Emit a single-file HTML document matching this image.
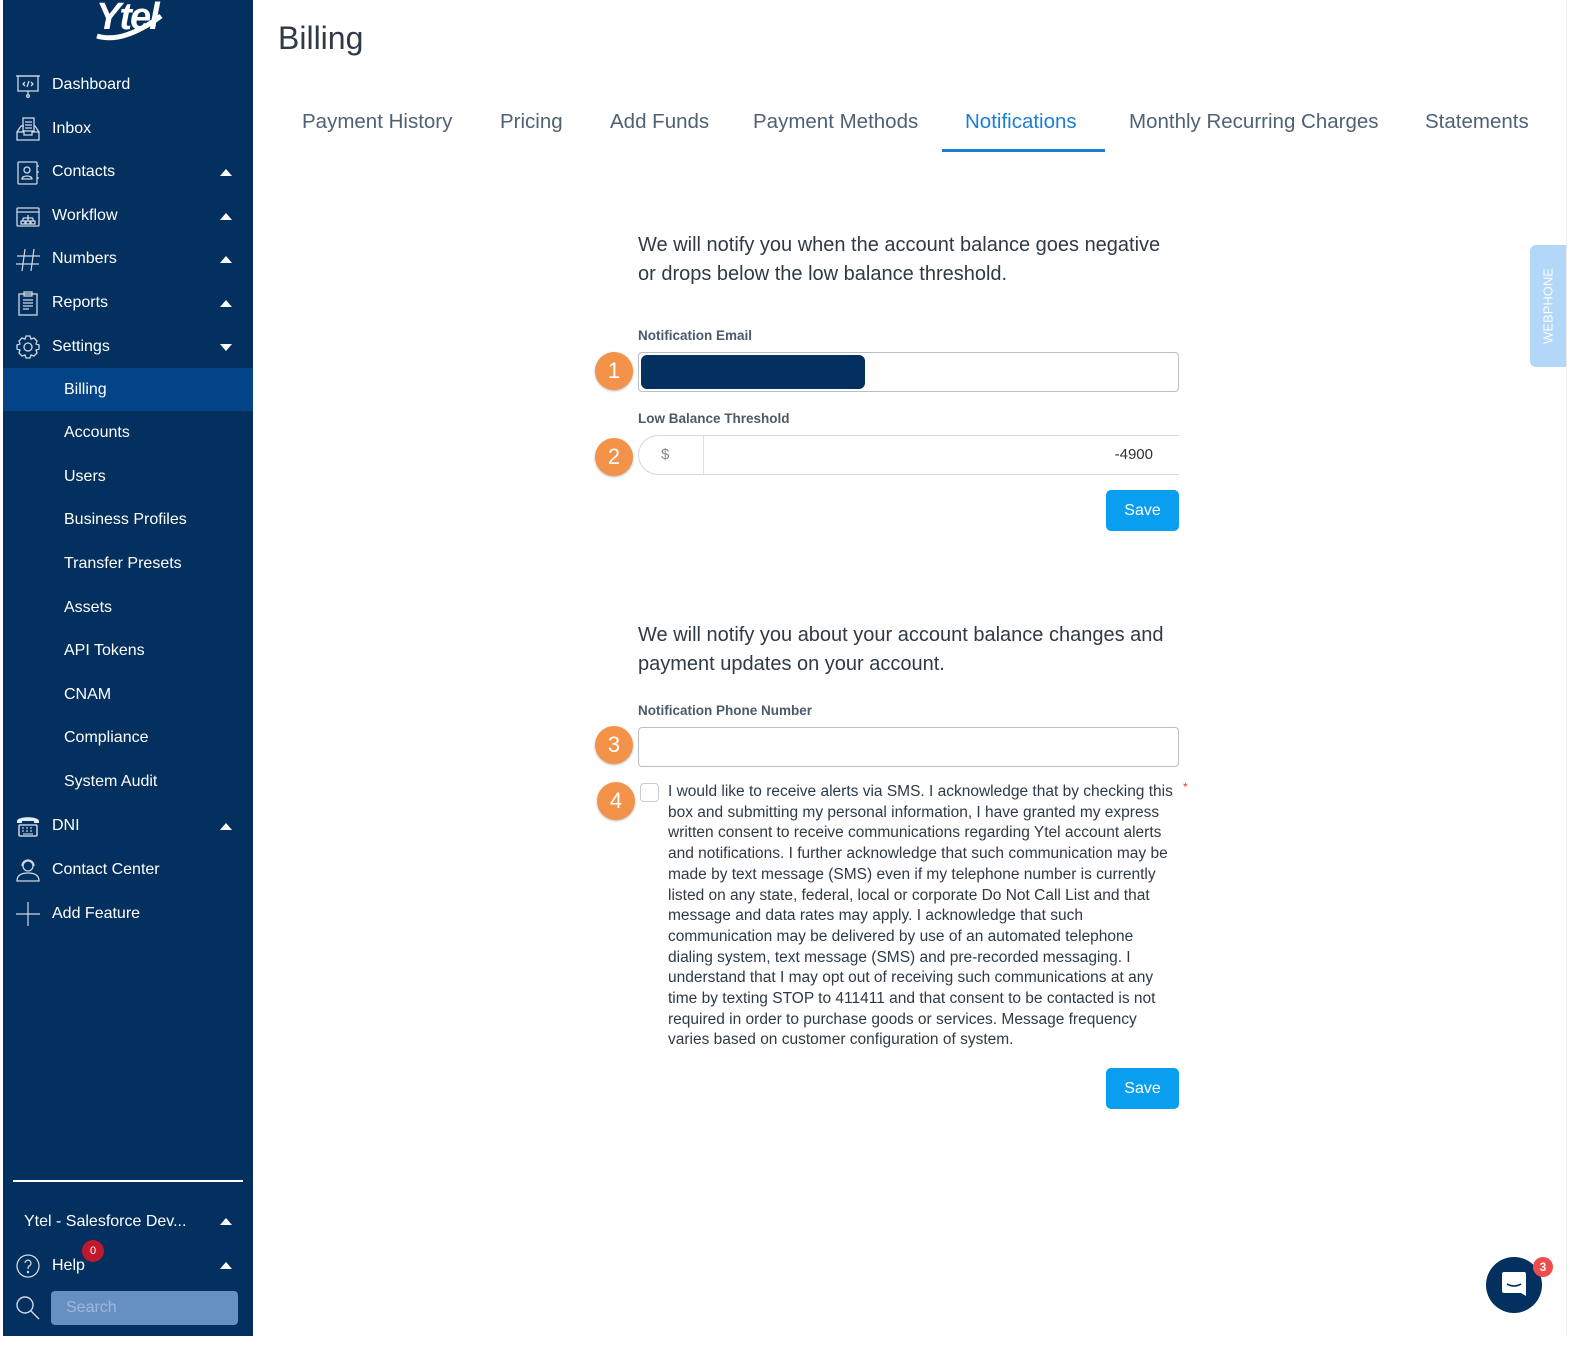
<!DOCTYPE html>
<html><head><meta charset="utf-8"><style>
*{box-sizing:border-box;margin:0;padding:0}
body{width:1588px;height:1353px;background:#fff;font-family:"Liberation Sans",sans-serif;position:relative;overflow:hidden}
.sb{position:absolute;left:3px;top:0;width:250px;height:1336px;background:#03305e}
.it{position:absolute;left:49px;color:#fff;font-size:16px;line-height:20px}
.sub{left:61px}
.ic{position:absolute;left:12px;width:26px;height:26px}
.car{position:absolute;left:217px;width:0;height:0;border-left:6px solid transparent;border-right:6px solid transparent;border-bottom:7px solid #fff}
.car.d{border-bottom:none;border-top:7px solid #fff}
.t{position:absolute;font-size:20.5px;color:#4f6275;top:110px}
.lbl{position:absolute;left:638px;font-size:13.5px;font-weight:bold;color:#4d5a68}
.inp{position:absolute;left:638px;width:541px;height:40px;border:1.5px solid #b9bfc6;border-radius:4px;background:#fff}
.b{position:absolute;width:38px;height:38px;border-radius:50%;background:#f39249;color:#fff;font-size:22px;text-align:center;line-height:38px;box-shadow:0 1px 2px rgba(0,0,0,.3)}
.save{position:absolute;left:1106px;width:73px;height:41px;background:#0a9ef0;border-radius:5px;color:#fff;font-size:16px;text-align:center;line-height:41px}
.p{position:absolute;left:638px;font-size:20px;color:#2f3a45;line-height:29px;width:530px}
</style></head><body>
<div class="sb">
<div style="position:absolute;left:93px;top:-4px;color:#fff;font-size:38px;font-weight:bold;font-style:italic;letter-spacing:-2px">Ytel</div>
<svg style="position:absolute;left:90px;top:14px" width="75" height="30"><path d="M4 22 Q30 30 68 2" stroke="#fff" stroke-width="5" fill="none"/></svg>

<svg class="ic" style="top:73px" viewBox="0 0 26 26" fill="none" stroke="#cfd8e3" stroke-width="1.3"><rect x="3" y="3" width="20" height="15"/><path d="M1 3h24M13 18v4"/><circle cx="13" cy="23" r="1.3"/><path d="M10 9l-2 2 2 2M16 9l2 2-2 2M14 8l-2 6"/></svg>
<div class="it" style="top:75px">Dashboard</div>
<svg class="ic" style="top:116px" viewBox="0 0 26 26" fill="none" stroke="#cfd8e3" stroke-width="1.3"><rect x="8" y="2" width="11" height="13"/><path d="M10 6h7M10 9h7M10 12h7M2 16l4-6h3M24 16l-4-6h-1M2 16h7v3h8v-3h7v8H2z"/></svg>
<div class="it" style="top:119px">Inbox</div>
<svg class="ic" style="top:160px" viewBox="0 0 26 26" fill="none" stroke="#cfd8e3" stroke-width="1.3"><rect x="3" y="2" width="19" height="22" rx="1"/><circle cx="12" cy="10" r="3"/><path d="M7 19c0-4 10-4 10 0zM22 6h2M22 12h2M22 18h2"/></svg>
<div class="it" style="top:162px">Contacts</div><div class="car" style="top:169px"></div>
<svg class="ic" style="top:204px" viewBox="0 0 26 26" fill="none" stroke="#cfd8e3" stroke-width="1.3"><rect x="2" y="4" width="22" height="18" rx="1"/><path d="M2 8h22M13 11v3M8 14h10M8 14v3M13 14v3M18 14v3"/><rect x="6" y="17" width="4" height="3"/><rect x="11" y="17" width="4" height="3"/><rect x="16" y="17" width="4" height="3"/></svg>
<div class="it" style="top:206px">Workflow</div><div class="car" style="top:213px"></div>
<svg class="ic" style="top:247px" viewBox="0 0 26 26" fill="none" stroke="#cfd8e3" stroke-width="1.2"><path d="M10 2L7 24M19 2L16 24M2 9h23M1 17h23"/></svg>
<div class="it" style="top:249px">Numbers</div><div class="car" style="top:256px"></div>
<svg class="ic" style="top:290px" viewBox="0 0 26 26" fill="none" stroke="#cfd8e3" stroke-width="1.3"><rect x="4" y="4" width="18" height="21"/><rect x="9" y="2" width="8" height="4"/><path d="M8 10h10M8 13h10M8 16h10M8 19h6"/></svg>
<div class="it" style="top:293px">Reports</div><div class="car" style="top:300px"></div>
<svg class="ic" style="top:334px" viewBox="0 0 26 26" fill="none" stroke="#cfd8e3" stroke-width="1.3"><circle cx="13" cy="13" r="4"/><path d="M11 2h4l1 3 3-1 3 3-1 3 3 1v4l-3 1 1 3-3 3-3-1-1 3h-4l-1-3-3 1-3-3 1-3-3-1v-4l3-1-1-3 3-3 3 1z"/></svg>
<div class="it" style="top:337px">Settings</div><div class="car d" style="top:344px"></div>
<div style="position:absolute;left:0;top:368px;width:250px;height:43px;background:#034489"></div>
<div class="it sub" style="top:380px">Billing</div>
<div class="it sub" style="top:423px">Accounts</div>
<div class="it sub" style="top:467px">Users</div>
<div class="it sub" style="top:510px">Business Profiles</div>
<div class="it sub" style="top:554px">Transfer Presets</div>
<div class="it sub" style="top:598px">Assets</div>
<div class="it sub" style="top:641px">API Tokens</div>
<div class="it sub" style="top:685px">CNAM</div>
<div class="it sub" style="top:728px">Compliance</div>
<div class="it sub" style="top:772px">System Audit</div>
<svg class="ic" style="top:813px" viewBox="0 0 26 26" fill="#e6ecf3"><path d="M2 8c0-5 22-5 22 0v2h-5V8H7v2H2z"/><rect x="4" y="12" width="18" height="11" rx="1" fill="none" stroke="#e6ecf3" stroke-width="1.3"/><path d="M7 15h2M11 15h2M15 15h2M7 18h2M11 18h2M15 18h2M8 21h10" stroke="#e6ecf3"/></svg>
<div class="it" style="top:816px">DNI</div><div class="car" style="top:823px"></div>
<svg class="ic" style="top:857px" viewBox="0 0 26 26" fill="none" stroke="#cfd8e3" stroke-width="1.3"><circle cx="13" cy="9" r="5"/><path d="M7 9a6 6 0 0 1 12 0M2 24c0-6 5-8 11-8s11 2 11 8z"/></svg>
<div class="it" style="top:860px">Contact Center</div>
<svg class="ic" style="top:901px" viewBox="0 0 26 26" fill="none" stroke="#cfd8e3" stroke-width="1.2"><path d="M13 1v24M1 13h24"/></svg>
<div class="it" style="top:904px">Add Feature</div>
<div style="position:absolute;left:10px;top:1180px;width:230px;height:2px;background:#fff"></div>
<div class="it" style="left:21px;top:1212px">Ytel - Salesforce Dev...</div><div class="car" style="top:1218px"></div>
<svg class="ic" style="top:1253px" viewBox="0 0 26 26" fill="none" stroke="#cfd8e3" stroke-width="1.3"><circle cx="13" cy="13" r="11"/><path d="M10 10a3 3 0 1 1 4 3c-1 1-1 2-1 3"/><circle cx="13" cy="19" r=".6"/></svg>
<div class="it" style="top:1256px">Help</div><div class="car" style="top:1262px"></div>
<div style="position:absolute;left:79px;top:1240px;width:22px;height:22px;border-radius:50%;background:#c0182c;color:#fff;font-size:11px;text-align:center;line-height:22px">0</div>
<svg class="ic" style="top:1295px" viewBox="0 0 26 26" fill="none" stroke="#cfd8e3" stroke-width="1.4"><circle cx="10" cy="10" r="8"/><path d="M16 16l8 8"/></svg>
<div style="position:absolute;left:48px;top:1291px;width:187px;height:34px;background:#6690c2;border-radius:4px;color:#9fb8d8;font-size:16px;line-height:34px;padding-left:15px">Search</div>
</div>

<div style="position:absolute;left:278px;top:20px;font-size:32px;color:#2f3a45">Billing</div>
<div class="t" style="left:302px">Payment History</div>
<div class="t" style="left:500px">Pricing</div>
<div class="t" style="left:610px">Add Funds</div>
<div class="t" style="left:753px">Payment Methods</div>
<div class="t" style="left:965px;color:#1a7fd4">Notifications</div>
<div style="position:absolute;left:942px;top:149px;width:163px;height:3px;background:#1a7fd4"></div>
<div class="t" style="left:1129px">Monthly Recurring Charges</div>
<div class="t" style="left:1425px">Statements</div>

<div class="p" style="top:231px">We will notify you when the account balance goes negative<br>or drops below the low balance threshold.</div>
<div class="lbl" style="top:328px">Notification Email</div>
<div class="inp" style="top:352px"><div style="position:absolute;left:2px;top:2px;width:224px;height:34px;background:#03305e;border-radius:6px"></div></div>
<div class="b" style="left:595px;top:352px">1</div>
<div class="lbl" style="top:411px">Low Balance Threshold</div>
<div class="inp" style="top:435px;border-color:#d5d9de;border-radius:20px 0 0 20px;border-right:none;border-top-width:1.5px"><div style="position:absolute;left:64px;top:0;width:1px;height:38px;background:#dde1e5"></div><div style="position:absolute;left:22px;top:10px;color:#888;font-size:15px">$</div><div style="position:absolute;right:26px;top:10px;color:#333;font-size:15px">-4900</div></div>
<div class="b" style="left:595px;top:438px">2</div>
<div class="save" style="top:490px">Save</div>

<div class="p" style="top:621px">We will notify you about your account balance changes and payment updates on your account.</div>
<div class="lbl" style="top:703px">Notification Phone Number</div>
<div class="inp" style="top:727px"></div>
<div class="b" style="left:595px;top:726px">3</div>
<div class="b" style="left:597px;top:782px">4</div>
<div style="position:absolute;left:640px;top:783px;width:19px;height:19px;border:1px solid #c6ccd2;border-radius:4px"></div>
<div style="position:absolute;left:668px;top:782px;width:512px;font-size:15.5px;line-height:20.7px;color:#2f3a45">I would like to receive alerts via SMS. I acknowledge that by checking this box and submitting my personal information, I have granted my express written consent to receive communications regarding Ytel account alerts and notifications. I further acknowledge that such communication may be made by text message (SMS) even if my telephone number is currently listed on any state, federal, local or corporate Do Not Call List and that message and data rates may apply. I acknowledge that such<br>communication may be delivered by use of an automated telephone<br>dialing system, text message (SMS) and pre-recorded messaging. I understand that I may opt out of receiving such communications at any time by texting STOP to 411411 and that consent to be contacted is not required in order to purchase goods or services. Message frequency varies based on customer configuration of system.</div>
<div style="position:absolute;left:1183px;top:780px;color:#e33;font-size:12px">*</div>
<div class="save" style="top:1068px">Save</div>

<div style="position:absolute;left:1530px;top:245px;width:36px;height:122px;background:#b2d7f9;border-radius:6px 0 0 6px"><div style="position:absolute;left:18px;top:61px;transform:translate(-50%,-50%) rotate(-90deg);color:#fff;font-size:13px;white-space:nowrap">WEBPHONE</div></div>
<div style="position:absolute;left:1486px;top:1257px;width:56px;height:56px;border-radius:50%;background:#03305e"><svg style="position:absolute;left:16px;top:15px" width="24" height="28" viewBox="0 0 24 28"><path d="M2 0h20a2 2 0 0 1 2 2v22l-5-3H2a2 2 0 0 1-2-2V2a2 2 0 0 1 2-2z" fill="#fff"/><path d="M5 12q7 4 14 0" stroke="#03305e" stroke-width="1.6" fill="none"/></svg></div>
<div style="position:absolute;left:1533px;top:1257px;width:20px;height:20px;border-radius:50%;background:#ef4d4d;color:#fff;font-size:12px;font-weight:bold;text-align:center;line-height:20px">3</div>
<div style="position:absolute;left:1566px;top:0;width:1px;height:1336px;background:#eceef0"></div>
<div style="position:absolute;left:0;top:1336px;width:1588px;height:17px;background:#fff"></div>
</body></html>
